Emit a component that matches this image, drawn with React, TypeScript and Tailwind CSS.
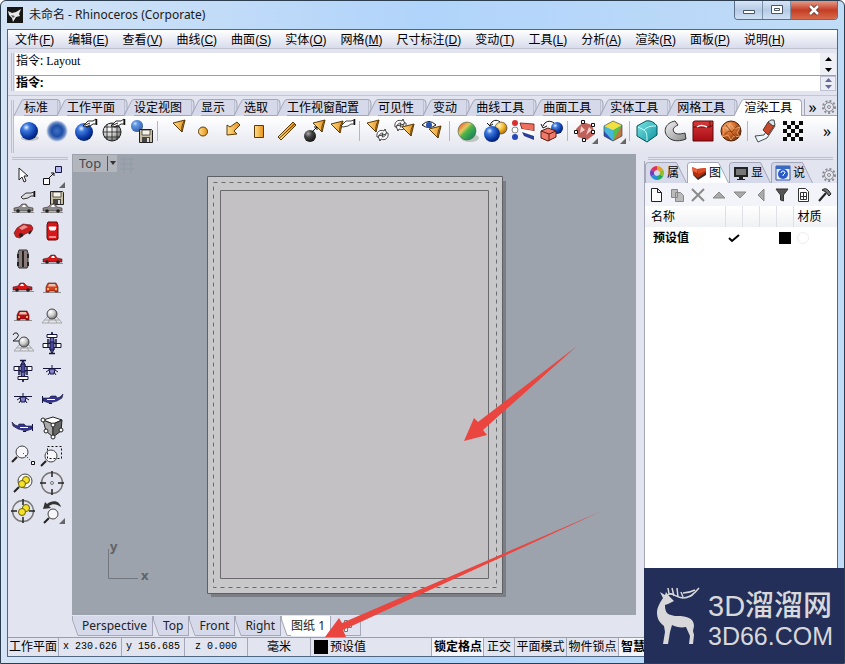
import type { ReactNode } from "react";
import clsx from "clsx";

const menus = [
  ["文件", "F"],
  ["编辑", "E"],
  ["查看", "V"],
  ["曲线", "C"],
  ["曲面", "S"],
  ["实体", "O"],
  ["网格", "M"],
  ["尺寸标注", "D"],
  ["变动", "T"],
  ["工具", "L"],
  ["分析", "A"],
  ["渲染", "R"],
  ["面板", "P"],
  ["说明", "H"],
];

const toolTabs = [
  "标准",
  "工作平面",
  "设定视图",
  "显示",
  "选取",
  "工作视窗配置",
  "可见性",
  "变动",
  "曲线工具",
  "曲面工具",
  "实体工具",
  "网格工具",
  "渲染工具",
];

const viewTabs = ["Perspective", "Top", "Front", "Right", "图纸 1"];

/* ---------- shared drawing parts ---------- */

function Defs() {
  return (
    <svg className="absolute size-0" aria-hidden="true">
      <defs>
        <radialGradient id="blue" cx="0.35" cy="0.3" r="0.75">
          <stop offset="0" stopColor="#e6f2ff" />
          <stop offset="0.25" stopColor="#3f7be0" />
          <stop offset="0.7" stopColor="#0b3aa6" />
          <stop offset="1" stopColor="#041a5c" />
        </radialGradient>
        <radialGradient id="softblue" cx="0.5" cy="0.5" r="0.5">
          <stop offset="0" stopColor="#3f6fc4" />
          <stop offset="0.5" stopColor="#1f4ea8" />
          <stop offset="0.75" stopColor="#5f82bf" />
          <stop offset="1" stopColor="#5f82bf" stopOpacity="0" />
        </radialGradient>
        <radialGradient id="grey" cx="0.35" cy="0.3" r="0.75">
          <stop offset="0" stopColor="#ffffff" />
          <stop offset="0.5" stopColor="#d0d0d0" />
          <stop offset="1" stopColor="#6a6a6a" />
        </radialGradient>
        <radialGradient id="dark" cx="0.35" cy="0.3" r="0.75">
          <stop offset="0" stopColor="#aaaaaa" />
          <stop offset="0.4" stopColor="#444444" />
          <stop offset="1" stopColor="#111111" />
        </radialGradient>
        <radialGradient id="yellow" cx="0.35" cy="0.3" r="0.75">
          <stop offset="0" stopColor="#fff6c0" />
          <stop offset="0.5" stopColor="#f5b92c" />
          <stop offset="1" stopColor="#a86a06" />
        </radialGradient>
        <radialGradient id="wood" cx="0.35" cy="0.3" r="0.75">
          <stop offset="0" stopColor="#f5b070" />
          <stop offset="0.5" stopColor="#d0692a" />
          <stop offset="1" stopColor="#7a3208" />
        </radialGradient>
        <linearGradient id="gold" x1="0" x2="1">
          <stop offset="0" stopColor="#ffe08a" />
          <stop offset="1" stopColor="#e8901a" />
        </linearGradient>
        <linearGradient id="rainbow" x1="0" x2="1" y1="0" y2="1">
          <stop offset="0.1" stopColor="#e8542a" />
          <stop offset="0.35" stopColor="#e8c860" />
          <stop offset="0.5" stopColor="#4db54a" />
          <stop offset="0.8" stopColor="#1f8a58" />
          <stop offset="1" stopColor="#d04040" />
        </linearGradient>
        <linearGradient id="teal" x1="0" x2="1" y1="0" y2="1">
          <stop offset="0" stopColor="#7fe8e8" />
          <stop offset="1" stopColor="#0b8f9c" />
        </linearGradient>
        <linearGradient id="redbox" x1="0" x2="0" y1="0" y2="1">
          <stop offset="0" stopColor="#d83a3a" />
          <stop offset="1" stopColor="#a80c14" />
        </linearGradient>
        <linearGradient id="steel" x1="0" x2="1" y1="0" y2="1">
          <stop offset="0" stopColor="#f4f4f4" />
          <stop offset="1" stopColor="#8a8a8a" />
        </linearGradient>
      </defs>
    </svg>
  );
}

const hand = (
  <g stroke="#111" strokeWidth="0.9" fill="#fff">
    <path d="M12 9l5-5h5l3-2v5h-3l-3 2-3 1-2-1z" />
    <path d="M14 8l5-2M15 10l4-2" fill="none" />
    <path d="M25.500 2v6" strokeWidth="1.500" fill="none" />
  </g>
);

const corner = <path d="M27 21v6h-6z" fill="#666" />;

const floppy = (
  <g>
    <path d="M13.500 12.500h12l1 1v12h-13z" fill="#c9bfa4" stroke="#222" />
    <path d="M16 13h8v5h-8z" fill="#f5f2e6" stroke="#222" strokeWidth="0.7" />
    <path d="M16 20h8v5h-8z" fill="#444" />
    <path d="M21 21h2v4h-2z" fill="#ddd" />
  </g>
);

function Cone({ x, y }: { x: number; y: number }) {
  return (
    <g transform={`translate(${x} ${y})`}>
      <path d="M0 3L12 0l-3 12z" fill="url(#gold)" stroke="#5a3a06" />
      <path d="M12 0c-2 2-4 8-3 12" fill="none" stroke="#5a3a06" />
    </g>
  );
}

function Swap({ x, y }: { x: number; y: number }) {
  return (
    <g transform={`translate(${x} ${y})`} fill="#fff" stroke="#333" strokeWidth="0.9">
      <path d="M0 8c-1-5 3-8 7-6l1-2 2 5-5 1 1-2C4 4 2 5 2 8z" />
      <path d="M11 4c1 5-3 8-7 6l-1 2-2-5 5-1-1 2c2 0 4-1 4-4z" />
    </g>
  );
}

/* ---------- main toolbar icons ---------- */

const groups: { name: string; art: ReactNode }[][] = [
  [
    { name: "渲染", art: <><ellipse cx="15" cy="21" rx="9" ry="3" fill="#999" opacity="0.5" /><circle cx="14" cy="14" r="9" fill="url(#blue)" /></> },
    { name: "渲染预览", art: <circle cx="14" cy="14" r="11" fill="url(#softblue)" /> },
    { name: "渲染设置", art: <><circle cx="13" cy="15" r="9" fill="url(#blue)" />{hand}</> },
    {
      name: "渲染网格",
      art: (
        <>
          <circle cx="13" cy="15" r="9" fill="url(#grey)" stroke="#222" />
          <path d="M4 15h18M5 10h16M5 20h16M13 6v18M8 7v16M18 7v16" stroke="#222" strokeWidth="0.8" />
          {hand}
        </>
      ),
    },
    { name: "另存渲染", art: <><circle cx="10" cy="9" r="6" fill="url(#blue)" /><circle cx="10" cy="9" r="6" fill="#9cc8ef" opacity="0.4" /><g transform="translate(-1 0)">{floppy}</g></> },
  ],
  [
    { name: "聚光灯", art: <Cone x={12} y={3} /> },
    { name: "点光源", art: <circle cx="14" cy="14.500" r="4.500" fill="url(#gold)" stroke="#5a3a06" /> },
    { name: "平行光", art: <path d="M20 5l3 3-6 6 3 3-10 1V8l3 2z" fill="url(#gold)" stroke="#5a3a06" /> },
    { name: "矩形灯光", art: <path d="M9.500 8.500h9v12h-9z" fill="url(#gold)" stroke="#5a3a06" /> },
    { name: "管状灯", art: <><path d="M5 20L20 5l3 3L8 23z" fill="url(#gold)" stroke="#5a3a06" /><path d="M6 21.500L22 6.500" stroke="#5a3a06" /></> },
    { name: "按高光设置灯光", art: <><circle cx="9" cy="19" r="6" fill="url(#dark)" /><Cone x={12} y={3} /><path d="M11 15l5-5m-3 0h3v3" stroke="#111" fill="none" /></> },
    { name: "编辑灯光属性", art: <><Cone x={2} y={4} /><path d="M12 9l5-5h5l3-1v4h-3l-3 2-5 1z" fill="#fff" stroke="#333" strokeWidth="0.9" /><path d="M25.500 2v6" stroke="#111" strokeWidth="1.500" /></> },
  ],
  [
    { name: "灯光转换", art: <><Cone x={4} y={3} /><Swap x={14} y={12} /></> },
    { name: "切换灯光", art: <><Swap x={4} y={2} /><Cone x={11} y={7} /></> },
    { name: "灯光视图", art: <><path d="M3 8q7-7 14 0-7 5-14 0z" fill="#fff" stroke="#111" /><circle cx="10" cy="8" r="3" fill="#2a52b0" /><Cone x={10} y={9} /></> },
  ],
  [
    { name: "材质", art: <><ellipse cx="17" cy="21" rx="9" ry="4" fill="#8a9a8a" opacity="0.5" /><circle cx="14" cy="14" r="9" fill="url(#rainbow)" stroke="#3a5a3a" strokeWidth="0.6" /></> },
    { name: "匹配材质", art: <><circle cx="20" cy="11" r="6" fill="url(#yellow)" stroke="#333" strokeWidth="0.6" /><circle cx="11" cy="17" r="8" fill="url(#blue)" /><path d="M9 8c2-5 7-6 10-3M6 6l3 3 3-2" stroke="#111" fill="none" /></> },
    { name: "图层材质", art: <><circle cx="6" cy="6" r="3" fill="#d83030" /><circle cx="6" cy="13" r="3" fill="#fff" stroke="#888" /><circle cx="6" cy="20" r="3" fill="#2448b8" /><path d="M11 6l14 1v7l-12-2z" fill="#ee7060" stroke="#6a1a12" strokeWidth="0.8" /><path d="M13 12l12 2v5l-12-3z" fill="#fff" /><path d="M13 15l12 4v4l-10-4z" fill="#2a3f9a" /></> },
    { name: "指定材质", art: <><circle cx="20" cy="11" r="6" fill="url(#blue)" /><path d="M4 14l7-3 8 3v6l-8 4-7-3z" fill="#ef7a6a" stroke="#5a1a12" /><path d="M4 14l8 3 7-3M12 17v7" stroke="#5a1a12" fill="none" /><path d="M6 9c2-5 7-6 11-3M4 7l2 4 4-2" stroke="#111" fill="none" /></> },
  ],
  [
    { name: "贴图轴", art: <><path d="M5 12l7-7 9 3 3 9-8 6-9-3z" fill="#c0605a" /><path d="M10 9l4 4-5 3zM18 10l3 3-6 5z" fill="#f0d0c8" /><g fill="#fff" stroke="#111"><path d="M10.500 3.500h3v3h-3zM20.500 6.500h3v3h-3zM3.500 13.500h3v3h-3zM20.500 13.500h3v3h-3zM11.500 21.500h3v3h-3z" /></g>{corner}</> },
    { name: "贴图坐标", art: <><path d="M5 9l9-5 9 4-9 5z" fill="#f0e040" /><path d="M5 9l9 4v11l-9-5z" fill="#48b8d8" /><path d="M5 14l9 10-9-5z" fill="#3050c0" /><path d="M14 13l9-5v11l-9 5z" fill="#50c050" /><path d="M23 8v11l-9 5z" fill="#e06040" opacity="0.8" /><path d="M5 9l9-5 9 4v11l-9 5-9-5z" fill="none" stroke="#333" strokeWidth="0.6" />{corner}</> },
  ],
  [
    { name: "圆角", art: <><path d="M4 9l9-5c5-1 9 2 11 5v9l-10 7-10-6z" fill="url(#teal)" stroke="#075058" /><path d="M5 10l6 3c4-4 8-4 12-4M11 13c3 2 3 6 3 11" fill="none" stroke="#c8ffff" /></> },
    { name: "圆管", art: <path d="M14 4C4 6 1 15 8 21c5 4 12 3 17 1l-1-6c-4 1-9 2-11-1s0-5 4-7z" fill="url(#steel)" stroke="#333" /> },
    { name: "接缝", art: <><path d="M4 5l2-1h18v20H4z" fill="url(#redbox)" stroke="#5a0a0a" /><path d="M4 10h17V4M21 10l3-2" fill="none" stroke="#5a0a0a" /><path d="M8 10q4-3 10 0" stroke="#fff" fill="none" strokeWidth="1.500" /></> },
    { name: "置换贴图", art: <><circle cx="14" cy="14" r="10" fill="url(#wood)" stroke="#4a1d05" /><path d="M6 10l5 2 2-6 4 6 6-2-3 6 3 4-6-1-3 4-3-5-6 2 2-5z" fill="none" stroke="#f0b080" strokeWidth="0.8" /><path d="M8 17l4-3 3 1 5-6M9 8l4 5 2 3 4 4" stroke="#7a3a12" fill="none" strokeWidth="0.8" /></> },
  ],
  [
    { name: "贴纸", art: <><path d="M4 19l9-1 8-13 3 4-8 12-9 4z" fill="#eef6ff" stroke="#222" strokeWidth="0.8" /><path d="M12 13l5-8h4l2 4-6 9z" fill="#c8482c" stroke="#4a1a0a" strokeWidth="0.8" /><path d="M17 5l3-2h3l1 5-2 1z" fill="#d8e4f0" stroke="#222" strokeWidth="0.8" /></> },
    {
      name: "棋盘格",
      art: (
        <>
          <path d="M4 4h20v20H4z" fill="#0c0c0c" />
          <path d="M8 4h4v4H8zM16 4h4v4h-4zM4 8h4v4H4zM12 8h4v4h-4zM20 8h4v4h-4zM8 12h4v4H8zM16 12h4v4h-4zM4 16h4v4H4zM12 16h4v4h-4zM20 16h4v4h-4zM8 20h4v4H8zM16 20h4v4h-4z" fill="#f4f4f4" />
        </>
      ),
    },
  ],
];

/* ---------- side toolbar icons ---------- */

function CarSide({ color, y = 0, flip = false }: { color: string; y?: number; flip?: boolean }) {
  return (
    <g transform={flip ? `translate(28 ${y}) scale(-1 1)` : `translate(0 ${y})`}>
      <path d="M3 18.500h22" stroke="#777" strokeWidth="0.8" />
      <path d="M5 17v-3l5-1 3-3h4l2 3 5 1v3z" fill={color} stroke="#2a1010" strokeWidth="0.5" />
      <path d="M13 13l1-2h2l1 2z" fill="#fff" />
      <circle cx="9" cy="17" r="1.800" fill="#222" />
      <circle cx="20" cy="17" r="1.800" fill="#222" />
    </g>
  );
}

function CarFront({ color }: { color: string }) {
  return (
    <g>
      <path d="M5 19.500h18" stroke="#777" strokeWidth="0.8" />
      <path d="M8 14l2-4h8l2 4v5h-3v-1h-6v1H8z" fill={color} stroke="#4a0a0a" strokeWidth="0.6" />
      <path d="M11 11h6l1 2.500h-8z" fill="#e8c0b0" />
      <path d="M9 16h2M17 16h2" stroke="#ffe080" strokeWidth="1.500" />
    </g>
  );
}

function PlaneTop({ flip = false }: { flip?: boolean }) {
  return (
    <g transform={flip ? "translate(0 28) scale(1 -1)" : undefined} stroke="#14143c">
      <path d="M14 3l2 8v9l-2 5-2-5v-9z" fill="#6a6ac0" />
      <path d="M5 14.500h18v4H5z" fill="#fff" />
      <path d="M12 13h4v8h-4z" fill="#4848a0" />
      <path d="M9 5.500h10v3H9z" fill="#fff" />
      <path d="M10 10v9M18 10v9M11 24.500h6" strokeWidth="1.500" />
    </g>
  );
}

function PlaneFront() {
  return (
    <g stroke="#14143c" fill="none">
      <path d="M5 11.500h18M14 8v3" />
      <path d="M11 12h6l-1 5h-4z" fill="#8080cc" />
      <path d="M10 18l2-3M18 18l-2-3M8 15l3-2M20 15l-3-2" />
    </g>
  );
}

function PlaneSide({ flip = false }: { flip?: boolean }) {
  return (
    <g transform={flip ? "translate(28 0) scale(-1 1)" : undefined}>
      <path d="M5 13h6l2-2h5l1 2 3-1 3-3-1 4-5 3-8 2-6-2z" fill="#34348a" stroke="#14143c" strokeWidth="0.6" />
      <path d="M9 14.500h8" stroke="#fff" />
      <path d="M4.500 11v7M11 18.500h3" stroke="#14143c" />
    </g>
  );
}

function Lens({ x, y, r = 6 }: { x: number; y: number; r?: number }) {
  return (
    <g>
      <path d={`M${x - r + 1} ${y + r - 1}l-5 5`} stroke="#222" strokeWidth="2" />
      <circle cx={x} cy={y} r={r} fill="#f6f6fb" stroke="#444" />
    </g>
  );
}

const target = (
  <g fill="none">
    <circle cx="14" cy="14" r="10.500" stroke="#777" strokeWidth="1.500" />
    <path d="M14 2v6M14 20v6M2 14h6M20 14h6" stroke="#222" strokeWidth="1.500" />
  </g>
);

const beans = (
  <g fill="#f4e22a" stroke="#6a6008">
    <circle cx="17" cy="11" r="3.500" />
    <circle cx="13" cy="15" r="3.500" />
  </g>
);

const groundBall = (
  <g>
    <path d="M9 16h10l5 6H4zM6.500 19h15M13 16l-3 6M16 16l3 6" fill="none" stroke="#999" strokeWidth="0.8" />
    <circle cx="14" cy="13" r="5" fill="url(#grey)" stroke="#444" />
  </g>
);

const sideTools: { name: string; art: ReactNode }[] = [
  { name: "选取", art: <path d="M10 7v12l3-3 2 5 2-1-2-5h4z" fill="#fff" stroke="#222" /> },
  { name: "复制", art: <><path d="M5.500 17.500h6v6h-6z" fill="#fff" stroke="#111" /><path d="M17.500 5.500h6v6h-6z" fill="#b4b8f0" stroke="#14143c" /><path d="M11 17l5-5m-3 0h3v3" stroke="#111" fill="none" />{corner}</> },
  { name: "命名视图", art: <><CarSide color="#8a8a8a" y={5} /><path d="M12 8l5-4h5l3-1v4h-3l-3 2-5 1z" fill="#ddd" stroke="#222" strokeWidth="0.9" /><path d="M25.500 2v6" stroke="#111" strokeWidth="1.500" /></> },
  { name: "保存视图", art: <><g transform="translate(-1 -10)">{floppy}</g><CarSide color="#8a8a8a" y={5} /></> },
  { name: "透视", art: <><path d="M5 16l3-5 6-4 8 1 2 3-1 3-7 3-5 4-4-1z" fill="#cc2020" stroke="#5a0a0a" strokeWidth="0.6" /><path d="M10 11l5-3 4 2-6 3z" fill="#e89090" /><circle cx="12" cy="18" r="2" fill="#222" /><path d="M22 14l-2 3" stroke="#222" strokeWidth="2" /></> },
  { name: "顶视图", art: <><path d="M10 5h9l1 3v14l-2 1h-8l-1-2V8z" fill="#d81818" stroke="#5a0a0a" /><path d="M11 10h7l-1 3h-5zM11 20h7" fill="#fff" stroke="#fff" /></> },
  { name: "底视图", art: <><path d="M10 5h8l1 3v13l-1 2h-8l-1-2V8z" fill="#8a7a7a" stroke="#333" /><path d="M14 6v16M9 9v4M19 9v4M9 17v4M19 17v4" stroke="#222" strokeWidth="2" /></> },
  { name: "左视图", art: <CarSide color="#d81818" /> },
  { name: "右视图", art: <CarSide color="#d81818" flip /> },
  { name: "前视图", art: <CarFront color="#d8401c" /> },
  { name: "后视图", art: <CarFront color="#b80c14" /> },
  { name: "工作平面", art: groundBall },
  { name: "两点透视", art: <><path d="M4 6q1-3 4-2 3 2 0 5l-4 3h6" fill="none" stroke="#222" /><g transform="translate(1 0)">{groundBall}</g></> },
  { name: "工作平面顶视图", art: <PlaneTop /> },
  { name: "工作平面底视图", art: <PlaneTop flip /> },
  { name: "工作平面前视图", art: <PlaneFront /> },
  { name: "工作平面后视图", art: <PlaneFront /> },
  { name: "工作平面右视图", art: <PlaneSide /> },
  { name: "工作平面左视图", art: <PlaneSide flip /> },
  { name: "四点视图", art: <><path d="M5 7l10-3 9 3-9 4z" fill="#fff" stroke="#222" /><path d="M5 7l10 4v13L8 18z" fill="#aaa" stroke="#222" /><path d="M15 11l9-4-1 11-8 6z" fill="#666" stroke="#222" /><g fill="#fff" stroke="#222"><circle cx="5" cy="7" r="2" /><circle cx="15" cy="12" r="2" /><circle cx="8" cy="18" r="2" /><circle cx="23" cy="17" r="2" /><circle cx="15" cy="24" r="2" /></g></> },
  { name: "动态缩放", art: <><Lens x={13} y={11} /><path d="M14 12l8 8" stroke="#111" strokeDasharray="1 2" /><path d="M22.500 20.500h3v3h-3z" fill="#fff" stroke="#111" /></> },
  { name: "框选缩放", art: <><Lens x={13} y={15} /><path d="M9.500 5.500h14v12h-14z" fill="none" stroke="#111" strokeDasharray="2 2" /></> },
  { name: "缩放至选取物件", art: <><Lens x={16} y={12} r={7} />{beans}</> },
  { name: "设置视图目标点", art: <>{target}<circle cx="14" cy="14" r="1.500" fill="none" stroke="#777" /></> },
  { name: "目标点缩放", art: <>{target}{beans}</> },
  { name: "恢复视图", art: <><path d="M5 12l2-7 2 2c5-4 12-4 14 3-4-3-8-4-12-1l2 2z" fill="#333" /><Lens x={15} y={17} r={5} />{corner}</> },
];

const panelTools: { name: string; art: ReactNode }[] = [
  { name: "新图层", art: <path d="M3.500 1.500h6l4 4v9h-10zM9.500 1.500v4h4" fill="#fff" stroke="#222" /> },
  { name: "新子图层", art: <path d="M2.500 2.500h6v8h-6zM6.500 5.500h5l3 3v6h-8z" fill="#bbb" stroke="#888" /> },
  { name: "删除", art: <path d="M2 2l12 12M14 2L2 14" stroke="#8a8a8a" strokeWidth="2" /> },
  { name: "上移", art: <path d="M2 11l6-6 6 6z" fill="#aaa" stroke="#888" /> },
  { name: "下移", art: <path d="M2 5l6 6 6-6z" fill="#aaa" stroke="#888" /> },
  { name: "上移一个父图层", art: <path d="M11 2v12L5 8z" fill="#aaa" stroke="#888" /> },
  { name: "筛选", art: <path d="M2 2h12L9.500 8v6l-3-1V8z" fill="#555" stroke="#333" /> },
  { name: "图层状态", art: <path d="M3.500 1.500h7l3 3v10h-10zM5.500 5.500h6v7h-6zM8.500 5v8M5 9.500h7" fill="#fff" stroke="#333" /> },
  { name: "工具", art: <><path d="M3 14l7-8" stroke="#222" strokeWidth="2" /><path d="M6 3q4-3 7 1l2 3-2 2-3-4z" fill="#777" stroke="#222" /></> },
];

const panelTabs: { name: string; art: ReactNode }[] = [
  {
    name: "属",
    art: (
      <g fill="none" strokeWidth="4">
        <path d="M8 3a5 5 0 0 1 4.300 2.500" stroke="#e8a020" />
        <path d="M12.300 5.500a5 5 0 0 1 0 5" stroke="#90c030" />
        <path d="M12.300 10.500A5 5 0 0 1 8 13" stroke="#20a860" />
        <path d="M8 13a5 5 0 0 1-4.300-2.500" stroke="#2890d8" />
        <path d="M3.700 10.500a5 5 0 0 1 0-5" stroke="#7040c0" />
        <path d="M3.700 5.500A5 5 0 0 1 8 3" stroke="#e03060" />
      </g>
    ),
  },
  { name: "图", art: <><path d="M1 2l5 2 9-1v5l-8 6-5-5z" fill="#b03010" /><path d="M1 2l5 2v4L2 6z" fill="#f0603a" /><path d="M6 4l9-1v3L7 9z" fill="#e04820" /><path d="M2 9l5 4 8-6v3l-8 5-5-5z" fill="#3a2a2a" /></> },
  { name: "显", art: <><path d="M1 2h14v10H1z" fill="#222" /><path d="M3 4h10v6H3z" fill="#777" /><path d="M6 12h4v2h2v1H4v-1h2z" fill="#222" /></> },
  { name: "说", art: <><path d="M1 1h14v14H1z" fill="#e8eefc" stroke="#3a5a9a" /><path d="M1 1h14v3H1z" fill="#3a6ac0" /><circle cx="8" cy="9" r="5" fill="#2a5ac8" /><path d="M6 8q0-2 2-2t2 2l-2 2v1" fill="none" stroke="#fff" /></> },
];

function Gear() {
  return (
    <svg viewBox="0 0 16 16" className="size-4" fill="none" stroke="#8a8a94">
      <circle cx="8" cy="8" r="6" strokeWidth="2" strokeDasharray="2 2" />
      <circle cx="8" cy="8" r="4.500" fill="#e4e6ee" />
      <circle cx="8" cy="8" r="1.500" />
    </svg>
  );
}

function Grip() {
  return <div className="mx-1 mt-1 mb-px h-[3px] shrink-0 border-y border-[#bdbfcc]" />;
}

/* slanted left side of a toolbar tab, with the rounded end of its neighbour */
function TabEdge({ first, active }: { first: boolean; active: boolean }) {
  return (
    <svg viewBox="0 0 10 17" className="h-[17px] w-2.5 shrink-0">
      {!first && <path d="M0 .5q3 0 3 4v6L0 17z" fill="#d6d9ea" stroke="#a4a7b8" />}
      <path d="M0 17L7 3q1-3 3-3v17z" fill={active ? "#fff" : "#d6d9ea"} />
      <path d="M0 17L7 3q1-2.500 3-2.500" fill="none" stroke="#a4a7b8" />
    </svg>
  );
}

function ViewTab({ label, active }: { label: string; active: boolean }) {
  return (
    <button
      className={clsx(
        "flex h-5 items-center border-r border-[#a4a7b8] pr-[5px]",
        active ? "bg-white" : "border-b bg-[#d6d9ea]"
      )}
    >
      <svg viewBox="0 0 10 20" className="h-5 w-2.5 shrink-0">
        <path d="M0 0l7 20H0z" fill="#e2e4ef" />
        <path d="M.5 0v4L6 19.500h4" fill="none" stroke="#a4a7b8" />
      </svg>
      {label}
    </button>
  );
}

function TitleBar() {
  return (
    <header className="flex h-7 shrink-0 items-start justify-between">
      <div className="flex h-7 items-center gap-1.5">
        <svg viewBox="0 0 16 16" className="size-4">
          <path d="M0 0h16v16H0z" fill="#161616" />
          <path d="M1 4l4 2 4-1 5-3-2 5 1 2-4 1-3 5-1-4-3-3z" fill="#e8e8e8" />
          <path d="M4 8l4 1-2 2z" fill="#555" />
        </svg>
        <h1 className="text-xs text-[#1a1a1a]">未命名 - Rhinoceros (Corporate)</h1>
      </div>
      <div className="flex h-[19px] overflow-hidden rounded-b border border-t-0 border-[#5b6f88]">
        <button aria-label="最小化" className="flex w-7 items-center justify-center border-r border-[#7b8fa8] bg-linear-to-b from-[#d8e6f6] via-[#b5cbe6] to-[#cfe0f3]">
          <svg viewBox="0 0 14 12" className="h-3 w-3.5">
            <path d="M1.500 6.500h11v3h-11z" fill="#fff" stroke="#4a5566" />
          </svg>
        </button>
        <button aria-label="最大化" className="flex w-7 items-center justify-center border-r border-[#7b8fa8] bg-linear-to-b from-[#d8e6f6] via-[#b5cbe6] to-[#cfe0f3]">
          <svg viewBox="0 0 14 12" className="h-3 w-3.5">
            <path d="M1.500 1.500h11v8h-11zM4.500 4.500h5v2h-5z" fill="#fff" stroke="#4a5566" />
          </svg>
        </button>
        <button aria-label="关闭" className="flex w-[46px] items-center justify-center bg-linear-to-b from-[#e39a88] via-[#c43c24] to-[#d8694a]">
          <svg viewBox="0 0 14 12" className="h-3 w-3.5">
            <path d="M3 2l8 8M11 2l-8 8" stroke="#5a3030" strokeWidth="4" />
            <path d="M3 2l8 8M11 2l-8 8" stroke="#fff" strokeWidth="2.500" />
          </svg>
        </button>
      </div>
    </header>
  );
}

function CommandArea() {
  return (
    <div className="flex shrink-0 border-b border-[#c4c6d2] py-1 pr-px">
      <div className="mr-px ml-[3px] w-[3px] border-x border-[#bdbfcc]" />
      <div className="min-w-0 flex-1">
        <div className="flex h-[22px] bg-white">
          <p className="flex-1 pl-px text-xs leading-4">
            指令: <span className="font-['Liberation_Serif','Noto_Sans_CJK_SC',serif]">Layout</span>
          </p>
          <div className="flex w-4 flex-col items-center justify-around bg-[#eff0f6]">
            <svg viewBox="0 0 7 4" className="h-1 w-[7px]"><path d="M0 4l3.500-4L7 4z" /></svg>
            <svg viewBox="0 0 7 4" className="h-1 w-[7px]"><path d="M0 0l3.500 4L7 0z" /></svg>
          </div>
        </div>
        <div className="flex h-4 border-t border-[#9c9cac] bg-white text-xs">
          <label htmlFor="command" className="pl-px leading-[14px] font-bold">指令:</label>
          <input id="command" className="min-w-0 flex-1 bg-transparent px-1 outline-none" />
          <div className="flex w-4 flex-col items-center justify-around border border-[#c0c2d4] bg-[#eceef6]">
            <svg viewBox="0 0 7 4" className="h-1 w-[7px]" fill="#6a6a9a"><path d="M0 4l3.500-4L7 4z" /></svg>
            <svg viewBox="0 0 7 4" className="h-1 w-[7px]" fill="#6a6a9a"><path d="M0 0l3.500 4L7 0z" /></svg>
          </div>
        </div>
      </div>
    </div>
  );
}

function Toolbars() {
  return (
    <div className="flex shrink-0 pt-[3px]">
      <div className="mt-px ml-[3px] w-[3px] border-x border-[#bdbfcc]" />
      <div className="min-w-0 flex-1">
        <div className="flex h-[17px] text-xs">
          {toolTabs.map((t, i) => {
            const active = i === toolTabs.length - 1;
            return (
              <button key={t} className="flex shrink-0">
                <TabEdge first={i === 0} active={active} />
                <span
                  className={clsx(
                    "h-[17px] border-t border-[#a4a7b8] pr-[9px] leading-4",
                    active ? "rounded-tr border-r bg-white" : "border-b bg-[#d6d9ea]"
                  )}
                >
                  {t}
                </span>
              </button>
            );
          })}
          <div className="flex flex-1 items-center justify-end gap-px border-b border-[#a4a7b8]">
            <button aria-label="更多标签" className="h-4 w-4 border-l border-[#a4a7b8] text-center text-base leading-3">»</button>
            <button aria-label="选项"><Gear /></button>
          </div>
        </div>
        <div className="flex h-[37px] items-start bg-linear-to-b from-white to-[#e2e4ee] pt-px pl-px">
          {groups.map((g, gi) => (
            <div key={gi} className="flex">
              {gi > 0 && <div className="mt-1 mr-[3px] ml-0.5 h-5 w-px bg-[#b4b6c4]" />}
              {g.map((tool) => (
                <button key={tool.name} aria-label={tool.name}>
                  <svg viewBox="0 0 28 28" className="size-7">{tool.art}</svg>
                </button>
              ))}
            </div>
          ))}
          <button aria-label="更多工具" className="ml-auto h-7 w-5 text-base leading-6">»</button>
        </div>
      </div>
    </div>
  );
}

function Viewport() {
  return (
    <section className="relative flex min-w-0 flex-1 flex-col pt-px">
      <div className="relative min-h-0 flex-1 overflow-hidden bg-[#9ca3ad]">
        <svg viewBox="0 0 564 461" className="size-full">
          <path d="M52 3v16M59 3v16M48 5h14M48 10h14M48 15h14" stroke="#929aa5" fill="none" />
          <path d="M139 27h295v416H139z" fill="#7b7e85" />
          <path d="M135.500 22.500h295v417h-295z" fill="#c8c7c9" stroke="#5f6064" />
          <path d="M141.500 28.500h283v405h-283z" fill="none" stroke="#6a6a6e" strokeWidth="1" strokeDasharray="4 4" />
          <path d="M148.500 36.500h268v388h-268z" fill="#c3c1c4" stroke="#6a6a6e" />
          <path d="M36.500 395v29.500H66" fill="none" stroke="#74777d" />
          <text x="38" y="397" className="fill-[#606368] text-[13px] font-bold">y</text>
          <text x="69" y="426" className="fill-[#606368] text-[13px] font-bold">x</text>
        </svg>
        <button className="absolute top-px left-px flex h-[17px] items-center bg-[#b3b6bd] pl-1.5 text-[13px] text-[#45484e]">
          Top
          <span className="ml-1.5 flex h-[15px] w-2.5 items-center justify-end border-l border-[#55585e]">
            <svg viewBox="0 0 8 5" className="h-[5px] w-2"><path d="M1 0h6L4 4z" fill="#333" /></svg>
          </span>
        </button>
      </div>
      <div className="flex h-[22px] shrink-0 items-start pt-px text-xs text-[#222]">
        {viewTabs.map((t, i) => (
          <ViewTab key={t} label={t} active={i === viewTabs.length - 1} />
        ))}
        <button aria-label="新增图纸" className="flex h-5 w-[30px] items-center justify-center border-r border-b border-[#a4a7b8] bg-[#dfe1ee]">
          <svg viewBox="0 0 12 12" className="size-3"><path d="M4.500.5h3v4h4v3h-4v4h-3v-4h-4v-3h4z" fill="#fff" stroke="#777" /></svg>
        </button>
      </div>
      <svg viewBox="0 0 564 484" className="pointer-events-none absolute inset-0 size-full">
        <g fill="#ea453f">
          <path d="M505 193L411 277l4 5-23 6 10-23 4 4z" />
          <path d="M530 358L271 477l3 7-21 0 14-19 3 5z" />
        </g>
      </svg>
    </section>
  );
}

function LayerPanel() {
  return (
    <aside className="flex w-[201px] shrink-0 flex-col pl-2">
      <Grip />
      <div className="flex min-h-0 flex-1 flex-col border-l border-[#a4a7b8]">
        <div className="flex h-[22px] shrink-0 items-end justify-between">
          <div className="flex">
            {panelTabs.map((t, i) => (
              <button key={t.name} className="relative flex h-[21px] w-[42px] items-center gap-0.5 pl-1 text-xs">
                <svg viewBox="0 0 42 21" className="absolute inset-0 size-full">
                  <path d="M.5 21V3q0-2.500 3-2.500h28l10 20.500" fill={i === 1 ? "#fff" : "#d6d9ea"} stroke="#a4a7b8" />
                </svg>
                <svg viewBox="0 0 16 16" className="relative size-4">{t.art}</svg>
                <span className="relative">{t.name}</span>
              </button>
            ))}
          </div>
          <button aria-label="面板选项"><Gear /></button>
        </div>
        <div className="flex h-[23px] shrink-0 items-center bg-[#f3f4f9]">
          {panelTools.map((t) => (
            <button key={t.name} aria-label={t.name} className="flex w-[21px] justify-center">
              <svg viewBox="0 0 16 16" className="size-4">{t.art}</svg>
            </button>
          ))}
        </div>
        <div className="flex-1 bg-white">
          <table className="w-full table-fixed border-collapse text-left text-xs">
            <thead>
              <tr className="h-[21px] bg-linear-to-b from-white to-[#f0f1f4]">
                <th className="w-20 pl-1.5 font-normal">名称</th>
                <th aria-label="当前" className="w-[17px] border-x border-[#dfe0e6]" />
                <th aria-label="打开" className="w-[17px] border-x border-[#dfe0e6]" />
                <th aria-label="锁定" className="w-[17px] border-x border-[#dfe0e6]" />
                <th aria-label="颜色" className="w-[17px] border-x border-[#dfe0e6]" />
                <th className="pl-1 font-normal">材质</th>
              </tr>
            </thead>
            <tbody>
              <tr className="h-[22px]">
                <td className="pl-2 font-bold">预设值</td>
                <td>
                  <svg viewBox="0 0 12 10" className="mx-auto h-2.5 w-3"><path d="M1 5l3 3 7-6" fill="none" stroke="#000" strokeWidth="2" /></svg>
                </td>
                <td />
                <td />
                <td><div className="mx-auto size-3 bg-black" /></td>
                <td><div className="ml-1 size-3 rounded-full border border-[#eeeeee]" /></td>
              </tr>
            </tbody>
          </table>
        </div>
      </div>
    </aside>
  );
}

function StatusBar() {
  return (
    <footer className="flex h-[19px] shrink-0 overflow-hidden border-t border-[#9c9eae] text-xs leading-[18px] whitespace-nowrap [&>*]:shrink-0 [&>*]:overflow-hidden [&>*]:border-r [&>*]:border-[#a4a7b8]">
      <button className="w-[51px] text-center">工作平面</button>
      <span className="w-[63px] pl-1 font-['Liberation_Mono',monospace] text-[10px]">x 230.626</span>
      <span className="w-[63px] pl-1 font-['Liberation_Mono',monospace] text-[10px]">y 156.685</span>
      <span className="w-[63px] text-center font-['Liberation_Mono',monospace] text-[10px]">z 0.000</span>
      <button className="w-[63px] text-center">毫米</button>
      <button className="flex w-[121px] items-center gap-0.5 pl-[3px]">
        <span className="size-3.5 bg-black" />
        预设值
      </button>
      <button className="w-[52px] bg-[#f4f5fa] pl-0.5 text-left font-bold">锁定格点</button>
      <button className="w-[31px] text-center">正交</button>
      <button className="w-[52px] text-center">平面模式</button>
      <button className="w-[52px] text-center">物件锁点</button>
      <button className="w-[60px] bg-[#f4f5fa] pl-0.5 text-left font-bold">智慧轨迹</button>
    </footer>
  );
}

function Watermark() {
  return (
    <div className="absolute right-0 bottom-0 flex h-[95px] w-[200px] items-center gap-1 bg-[#232f58] pl-3 text-[#d8d8da]">
      <svg viewBox="0 0 48 62" className="h-[62px] w-12 shrink-0">
        <path
          d="M4 7l5 3 1-3 3 4 5 5-6 3-3 1c0 5 1 9 6 10 5 2 10 0 15 2 5 1 8 4 8 9l-1 5 1 4-1 9h-4l1-8-4-9c-5 1-10 0-14-2l-2 7-2 12H7l2-12-1-6C3 37 1 33 1 28c0-6 3-10 6-15z"
          fill="currentColor"
        />
        <path
          d="M12 10c3-4 8 3 15 3s12-5 16-10M13 9l-1-6M18 11l-2-8M22 12l-1-9M27 12l-2-5M31 12q4 0 7-4M27 8q6 0 12-3"
          fill="none"
          stroke="currentColor"
          strokeWidth="1.500"
        />
      </svg>
      <div className="whitespace-nowrap">
        <div className="font-['Liberation_Sans','Noto_Sans_CJK_SC',sans-serif] text-[29px] leading-10 font-medium">3D溜溜网</div>
        <div className="font-['Liberation_Sans',sans-serif] text-[25px] leading-5">3D66.COM</div>
      </div>
    </div>
  );
}

export default function App() {
  return (
    <div className="relative flex h-screen flex-col overflow-hidden rounded-t-md border border-[#2c3e50] bg-linear-to-r from-[#d4e4f5] via-[#b0d4fa] to-[#c0dcf6] px-1.5 pb-1.5 font-['Noto_Sans','Noto_Sans_CJK_SC',sans-serif] text-black">
      <Defs />
      <TitleBar />
      <main className="flex min-h-0 flex-1 flex-col border border-[#4f6780] bg-[#e2e4ef]">
        <nav className="flex h-[19px] shrink-0 items-center gap-3.5 overflow-hidden border-b border-[#c0c2d0] bg-linear-to-b from-white to-[#d8dcec] pt-0.5 pl-[7px] font-['Liberation_Sans','Noto_Sans_CJK_SC',sans-serif] text-xs whitespace-nowrap">
          {menus.map(([label, key]) => (
            <button key={key} className="shrink-0">
              {label}(<u>{key}</u>)
            </button>
          ))}
        </nav>
        <CommandArea />
        <Toolbars />
        <div className="flex min-h-0 flex-1">
          <aside className="w-16 shrink-0">
            <Grip />
            <div className="grid w-[58px] grid-cols-2 justify-items-center">
              {sideTools.map((t) => (
                <button key={t.name} aria-label={t.name}>
                  <svg viewBox="0 0 28 28" className="size-7">{t.art}</svg>
                </button>
              ))}
            </div>
          </aside>
          <Viewport />
          <LayerPanel />
        </div>
        <StatusBar />
      </main>
      <Watermark />
    </div>
  );
}
